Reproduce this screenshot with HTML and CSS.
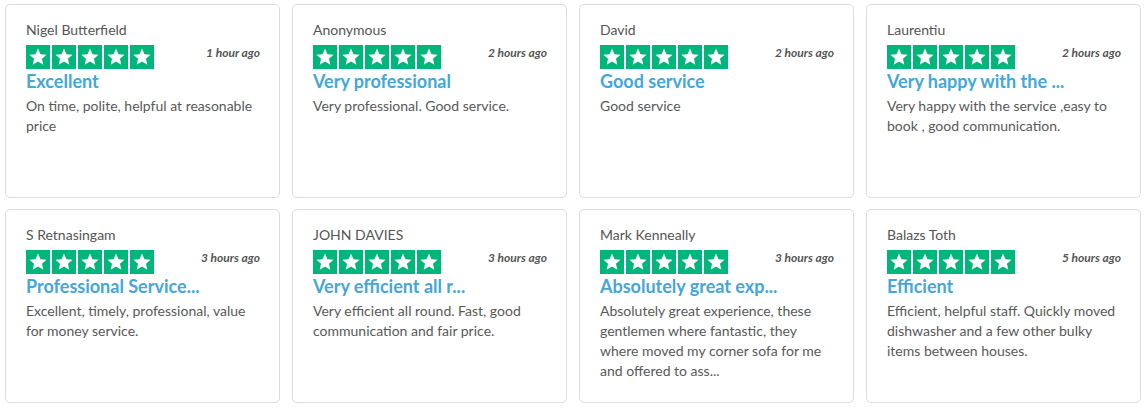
FILE: index.html
```html
<!DOCTYPE html>
<html>
<head>
<meta charset="utf-8">
<link rel="stylesheet" href="styles.css">
</head>
<body>
<svg width="0" height="0" class="defs">
  <defs>
    <symbol id="star" viewBox="0 0 24 24">
      <path d="M12 3.6l2.47 5.6 6.09.56-4.6 4.03 1.36 5.96L12 16.6l-5.32 3.15 1.36-5.96-4.6-4.03 6.09-.56z" fill="#fff"/>
    </symbol>
  </defs>
</svg>
<div class="grid">
  <div class="card">
    <div class="name">Nigel Butterfield</div>
    <div class="row"><div class="stars"><svg class="s"><use href="#star"/></svg><svg class="s"><use href="#star"/></svg><svg class="s"><use href="#star"/></svg><svg class="s"><use href="#star"/></svg><svg class="s"><use href="#star"/></svg></div><span class="time">1 hour ago</span></div>
    <div class="title">Excellent</div>
    <p class="text">On time, polite, helpful at reasonable price</p>
  </div>
  <div class="card">
    <div class="name">Anonymous</div>
    <div class="row"><div class="stars"><svg class="s"><use href="#star"/></svg><svg class="s"><use href="#star"/></svg><svg class="s"><use href="#star"/></svg><svg class="s"><use href="#star"/></svg><svg class="s"><use href="#star"/></svg></div><span class="time">2 hours ago</span></div>
    <div class="title">Very professional</div>
    <p class="text">Very professional. Good service.</p>
  </div>
  <div class="card">
    <div class="name">David</div>
    <div class="row"><div class="stars"><svg class="s"><use href="#star"/></svg><svg class="s"><use href="#star"/></svg><svg class="s"><use href="#star"/></svg><svg class="s"><use href="#star"/></svg><svg class="s"><use href="#star"/></svg></div><span class="time">2 hours ago</span></div>
    <div class="title">Good service</div>
    <p class="text">Good service</p>
  </div>
  <div class="card">
    <div class="name">Laurentiu</div>
    <div class="row"><div class="stars"><svg class="s"><use href="#star"/></svg><svg class="s"><use href="#star"/></svg><svg class="s"><use href="#star"/></svg><svg class="s"><use href="#star"/></svg><svg class="s"><use href="#star"/></svg></div><span class="time">2 hours ago</span></div>
    <div class="title">Very happy with the ...</div>
    <p class="text">Very happy with the service ,easy to book , good communication.</p>
  </div>
  <div class="card">
    <div class="name">S Retnasingam</div>
    <div class="row"><div class="stars"><svg class="s"><use href="#star"/></svg><svg class="s"><use href="#star"/></svg><svg class="s"><use href="#star"/></svg><svg class="s"><use href="#star"/></svg><svg class="s"><use href="#star"/></svg></div><span class="time">3 hours ago</span></div>
    <div class="title">Professional Service...</div>
    <p class="text">Excellent, timely, professional, value for money service.</p>
  </div>
  <div class="card">
    <div class="name">JOHN DAVIES</div>
    <div class="row"><div class="stars"><svg class="s"><use href="#star"/></svg><svg class="s"><use href="#star"/></svg><svg class="s"><use href="#star"/></svg><svg class="s"><use href="#star"/></svg><svg class="s"><use href="#star"/></svg></div><span class="time">3 hours ago</span></div>
    <div class="title">Very efficient all r...</div>
    <p class="text">Very efficient all round. Fast, good communication and fair price.</p>
  </div>
  <div class="card">
    <div class="name">Mark Kenneally</div>
    <div class="row"><div class="stars"><svg class="s"><use href="#star"/></svg><svg class="s"><use href="#star"/></svg><svg class="s"><use href="#star"/></svg><svg class="s"><use href="#star"/></svg><svg class="s"><use href="#star"/></svg></div><span class="time">3 hours ago</span></div>
    <div class="title">Absolutely great exp...</div>
    <p class="text">Absolutely great experience, these gentlemen where fantastic, they where moved my corner sofa for me and offered to ass...</p>
  </div>
  <div class="card">
    <div class="name">Balazs Toth</div>
    <div class="row"><div class="stars"><svg class="s"><use href="#star"/></svg><svg class="s"><use href="#star"/></svg><svg class="s"><use href="#star"/></svg><svg class="s"><use href="#star"/></svg><svg class="s"><use href="#star"/></svg></div><span class="time">5 hours ago</span></div>
    <div class="title">Efficient</div>
    <p class="text">Efficient, helpful staff. Quickly moved dishwasher and a few other bulky items between houses.</p>
  </div>
</div>
</body>
</html>
```
FILE: styles.css
```css
html, body {
  margin: 0;
  padding: 0;
  background: #fff;
}
body {
  font-family: Lato, "Liberation Sans", sans-serif;
  color: #555;
}
.defs {
  position: absolute;
  width: 0;
  height: 0;
}
.grid {
  display: grid;
  grid-template-columns: repeat(4, 275px);
  grid-auto-rows: 194px;
  column-gap: 12px;
  row-gap: 11px;
  padding: 4px 5px 0 5px;
}
.card {
  box-sizing: border-box;
  border: 1px solid #dcdcdc;
  border-radius: 5px;
  padding: 15px 19px 0 20px;
  background: #fff;
}
.name {
  font-size: 14px;
  line-height: 20px;
  color: #555;
}
.row {
  display: flex;
  justify-content: space-between;
  align-items: flex-start;
  margin-top: 5px;
}
.stars {
  display: flex;
  gap: 2px;
}
.s {
  width: 24px;
  height: 24px;
  background: #00b67a;
  display: block;
}
.time {
  font-size: 12px;
  font-weight: 700;
  font-style: italic;
  color: #555;
  line-height: 16px;
}
.title {
  font-size: 18px;
  font-weight: 700;
  line-height: 24px;
  color: #44a6da;
  white-space: nowrap;
}
.text {
  margin: 3px 0 0 0;
  font-size: 14px;
  line-height: 20px;
  color: #595959;
}
```
